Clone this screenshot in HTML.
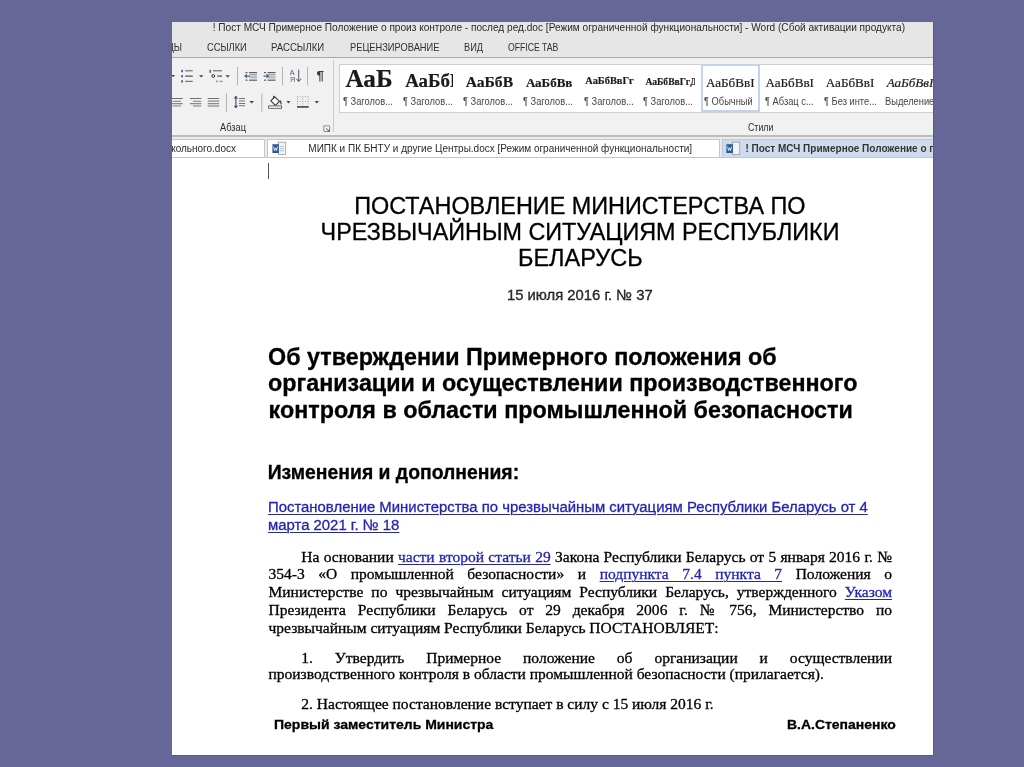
<!DOCTYPE html>
<html><head><meta charset="utf-8">
<style>
*{margin:0;padding:0;box-sizing:border-box}
html,body{width:1024px;height:767px;overflow:hidden;background:#666698}
body{position:relative;font-family:"Liberation Sans",sans-serif}
#clip{position:absolute;left:172px;top:22px;width:761px;height:733px;overflow:hidden;background:#fff;filter:blur(0.35px)}
#pg{position:absolute;left:-172px;top:-22px;width:1024px;height:767px}
.a{position:absolute;white-space:nowrap;line-height:1}
.r{position:absolute}
.sans{font-family:"Liberation Sans",sans-serif}
.serif{font-family:"Liberation Serif",serif}
.tt{color:#2a2a2a}
.tab{color:#303030}
.glab{color:#2e2e2e}
.glb{color:#454545}
.gs{color:#1a1a1a;-webkit-text-stroke:0.2px #1a1a1a}
.dt{color:#2a2a2a}
.doc{color:#000;-webkit-text-stroke:0.3px #000}
.lnk{color:#2424b4;-webkit-text-stroke:0.3px #2424b4;text-decoration:underline;text-decoration-color:#2c2c7c;text-underline-offset:2px;text-decoration-thickness:1.3px}
.j{text-align:justify;text-align-last:justify;white-space:normal}
</style></head><body>
<div class="r" style="left:933px;top:22px;width:1px;height:734px;background:#5b5b80"></div><div class="r" style="left:172px;top:755px;width:762px;height:1px;background:#5b5b80"></div>
<div id="clip"><div id="pg">
<div class="r" style="left:172px;top:22px;width:761px;height:35px;background:#e6e6e6;"></div>
<div class="r" style="left:172px;top:57px;width:761px;height:1px;background:#a8a8a8;"></div>
<div class="r" style="left:172px;top:58px;width:761px;height:77px;background:#f1f1f1;"></div>
<div class="r" style="left:172px;top:134.5px;width:761px;height:2px;background:#bdbdbd;"></div>
<div class="r" style="left:172px;top:136.5px;width:761px;height:21px;background:#ebebeb;"></div>
<div class="r" style="left:172px;top:157px;width:761px;height:598px;background:#ffffff;"></div>
<div class="a sans tt" style="left:212.70px;top:22.65px;font-size:10.1px;">! Пост МСЧ Примерное Положение о произ контроле - послед ред.doc [Режим ограниченной функциональности] - Word (Сбой активации продукта)</div>
<div class="a sans tab" style="left:166.60px;top:42.11px;font-size:10.5px;transform:scaleX(0.885);transform-origin:0 0;">ЦЫ</div>
<div class="a sans tab" style="left:206.60px;top:42.11px;font-size:10.5px;transform:scaleX(0.884);transform-origin:0 0;">ССЫЛКИ</div>
<div class="a sans tab" style="left:271.30px;top:42.11px;font-size:10.5px;transform:scaleX(0.916);transform-origin:0 0;">РАССЫЛКИ</div>
<div class="a sans tab" style="left:349.50px;top:42.11px;font-size:10.5px;transform:scaleX(0.886);transform-origin:0 0;">РЕЦЕНЗИРОВАНИЕ</div>
<div class="a sans tab" style="left:464.40px;top:42.11px;font-size:10.5px;transform:scaleX(0.882);transform-origin:0 0;">ВИД</div>
<div class="a sans tab" style="left:508.10px;top:42.11px;font-size:10.5px;transform:scaleX(0.826);transform-origin:0 0;">OFFICE TAB</div>
<div class="a sans glab" style="left:220.20px;top:123.03px;font-size:10.0px;transform:scaleX(0.927);transform-origin:0 0;">Абзац</div>
<div class="a sans glab" style="left:747.50px;top:122.73px;font-size:10.0px;transform:scaleX(0.88);transform-origin:0 0;">Стили</div>
<div class="r" style="left:333px;top:60px;width:1px;height:72px;background:#c9c9c9;"></div>
<div class="r" style="left:338.5px;top:63.5px;width:600px;height:49px;background:#ffffff;border:1px solid #cfcfcf;border-right:none"></div>
<div class="r" style="left:700.5px;top:64.2px;width:59.5px;height:47.5px;background:transparent;border:2px solid #c3d3ea"></div>
<div class="r" style="left:341.5px;top:64px;width:54.5px;height:30px;overflow:hidden"><div class="r" style="left:-341.5px;top:-64px;width:1024px;height:100px"><div class="a serif gs" style="left:345.50px;top:66.30px;font-size:25.2px;font-weight:bold">АаБ</div></div></div>
<div class="a sans glb" style="left:343.00px;top:97.33px;font-size:10.0px;transform:scaleX(0.93);transform-origin:0 0;">¶ Заголов...</div>
<div class="r" style="left:401.3px;top:64px;width:52.2px;height:30px;overflow:hidden"><div class="r" style="left:-401.3px;top:-64px;width:1024px;height:100px"><div class="a serif gs" style="left:405.20px;top:71.97px;font-size:18.9px;font-weight:bold">АаБбВ</div></div></div>
<div class="a sans glb" style="left:402.50px;top:97.33px;font-size:10.0px;transform:scaleX(0.93);transform-origin:0 0;">¶ Заголов...</div>
<div class="r" style="left:461.1px;top:64px;width:54.5px;height:30px;overflow:hidden"><div class="r" style="left:-461.1px;top:-64px;width:1024px;height:100px"><div class="a serif gs" style="left:465.70px;top:73.64px;font-size:15.6px;font-weight:bold">АаБбВ</div></div></div>
<div class="a sans glb" style="left:463.00px;top:97.33px;font-size:10.0px;transform:scaleX(0.93);transform-origin:0 0;">¶ Заголов...</div>
<div class="r" style="left:520.9px;top:64px;width:54.5px;height:30px;overflow:hidden"><div class="r" style="left:-520.9px;top:-64px;width:1024px;height:100px"><div class="a serif gs" style="left:525.90px;top:75.81px;font-size:13.0px;font-weight:bold">АаБбВв</div></div></div>
<div class="a sans glb" style="left:523.10px;top:97.33px;font-size:10.0px;transform:scaleX(0.93);transform-origin:0 0;">¶ Заголов...</div>
<div class="r" style="left:580.7px;top:64px;width:54.5px;height:30px;overflow:hidden"><div class="r" style="left:-580.7px;top:-64px;width:1024px;height:100px"><div class="a serif gs" style="left:585.30px;top:76.49px;font-size:10.4px;font-weight:bold">АаБбВвГг</div></div></div>
<div class="a sans glb" style="left:583.90px;top:97.33px;font-size:10.0px;transform:scaleX(0.93);transform-origin:0 0;">¶ Заголов...</div>
<div class="r" style="left:640.5px;top:64px;width:54.5px;height:30px;overflow:hidden"><div class="r" style="left:-640.5px;top:-64px;width:1024px;height:100px"><div class="a serif gs" style="left:645.40px;top:77.16px;font-size:9.6px;font-weight:bold">АаБбВвГгД</div></div></div>
<div class="a sans glb" style="left:643.40px;top:97.33px;font-size:10.0px;transform:scaleX(0.93);transform-origin:0 0;">¶ Заголов...</div>
<div class="r" style="left:700.3px;top:64px;width:54.5px;height:30px;overflow:hidden"><div class="r" style="left:-700.3px;top:-64px;width:1024px;height:100px"><div class="a serif gs" style="left:706.00px;top:76.23px;font-size:13.1px;">АаБбВвI</div></div></div>
<div class="a sans glb" style="left:703.90px;top:97.33px;font-size:10.0px;transform:scaleX(0.93);transform-origin:0 0;">¶ Обычный</div>
<div class="r" style="left:760.1px;top:64px;width:54.5px;height:30px;overflow:hidden"><div class="r" style="left:-760.1px;top:-64px;width:1024px;height:100px"><div class="a serif gs" style="left:765.40px;top:76.23px;font-size:13.1px;">АаБбВвI</div></div></div>
<div class="a sans glb" style="left:765.40px;top:97.33px;font-size:10.0px;transform:scaleX(0.93);transform-origin:0 0;">¶ Абзац с...</div>
<div class="r" style="left:819.9px;top:64px;width:54.5px;height:30px;overflow:hidden"><div class="r" style="left:-819.9px;top:-64px;width:1024px;height:100px"><div class="a serif gs" style="left:825.80px;top:76.23px;font-size:13.1px;">АаБбВвI</div></div></div>
<div class="a sans glb" style="left:824.10px;top:97.33px;font-size:10.0px;transform:scaleX(0.93);transform-origin:0 0;">¶ Без инте...</div>
<div class="r" style="left:879.7px;top:64px;width:54.5px;height:30px;overflow:hidden"><div class="r" style="left:-879.7px;top:-64px;width:1024px;height:100px"><div class="a serif gs" style="left:886.70px;top:76.23px;font-size:13.1px;font-style:italic">АаБбВвI</div></div></div>
<div class="a sans glb" style="left:884.80px;top:97.33px;font-size:10.0px;transform:scaleX(0.93);transform-origin:0 0;">Выделение</div>
<div class="r" style="left:172px;top:139px;width:93px;height:18.5px;background:#ffffff;border:1px solid #c6c6c6;border-left:none;border-bottom:none"></div>
<div class="r" style="left:267.3px;top:139px;width:453px;height:18.5px;background:#ffffff;border:1px solid #c6c6c6;border-bottom:none"></div>
<div class="r" style="left:722px;top:139px;width:220px;height:18.5px;background:#cfdcee;border:1px solid #b9c7dc;border-bottom:none"></div>
<div class="r" style="left:172px;top:157px;width:761px;height:1px;background:#c6c6c6;"></div>
<div class="a sans dt" style="left:150.00px;top:143.73px;font-size:10.0px;width:86px;text-align:right;direction:rtl">кольного.docx</div>
<div class="a sans dt" style="left:308.30px;top:143.73px;font-size:10.0px;">МИПК и ПК БНТУ и другие Центры.docx [Режим ограниченной функциональности]</div>
<div class="a sans dt" style="left:745.50px;top:143.73px;font-size:10.0px;font-weight:bold;color:#333">! Пост МСЧ Примерное Положение о произ контроле</div>
<div class="r" style="left:268px;top:162.5px;width:1px;height:16px;background:#555;"></div>
<div class="a sans doc" style="left:354.20px;top:194.77px;font-size:23.42px;">ПОСТАНОВЛЕНИЕ МИНИСТЕРСТВА ПО</div>
<div class="a sans doc" style="left:320.60px;top:220.73px;font-size:23.35px;">ЧРЕЗВЫЧАЙНЫМ СИТУАЦИЯМ РЕСПУБЛИКИ</div>
<div class="a sans doc" style="left:518.00px;top:246.61px;font-size:23.5px;">БЕЛАРУСЬ</div>
<div class="a sans doc" style="left:507.00px;top:288.47px;font-size:14.8px;color:#333">15 июля 2016 г. № 37</div>
<div class="a sans doc" style="left:268.10px;top:345.98px;font-size:23.3px;font-weight:bold">Об утверждении Примерного положения об</div>
<div class="a sans doc" style="left:268.10px;top:372.08px;font-size:23.3px;font-weight:bold">организации и осуществлении производственного</div>
<div class="a sans doc" style="left:268.60px;top:398.68px;font-size:23.3px;font-weight:bold">контроля в области промышленной безопасности</div>
<div class="a sans doc" style="left:267.70px;top:463.39px;font-size:19.38px;font-weight:bold">Изменения и дополнения:</div>
<div class="a sans lnk" style="left:268.00px;top:499.89px;font-size:14.9px;">Постановление Министерства по чрезвычайным ситуациям Республики Беларусь от 4</div>
<div class="a sans lnk" style="left:268.00px;top:517.69px;font-size:14.9px;">марта 2021 г. № 18</div>
<div class="a serif j doc" style="left:301.30px;top:548.50px;width:590.70px;font-size:15.52px;">На основании <span class="lnk">части второй статьи 29</span> Закона Республики Беларусь от 5 января 2016 г. №</div>
<div class="a serif j doc" style="left:268.50px;top:566.30px;width:623.50px;font-size:15.52px;">354-3 «О промышленной безопасности» и <span class="lnk">подпункта 7.4 пункта 7</span> Положения о</div>
<div class="a serif j doc" style="left:268.50px;top:584.20px;width:623.50px;font-size:15.52px;">Министерстве по чрезвычайным ситуациям Республики Беларусь, утвержденного <span class="lnk">Указом</span></div>
<div class="a serif j doc" style="left:268.50px;top:602.00px;width:623.50px;font-size:15.52px;">Президента Республики Беларусь от 29 декабря 2006 г. <span style="margin-right:-5px">№</span> 756, Министерство по</div>
<div class="a serif doc" style="left:268.50px;top:619.60px;font-size:15.52px;">чрезвычайным ситуациям Республики Беларусь ПОСТАНОВЛЯЕТ:</div>
<div class="a serif j doc" style="left:301.30px;top:650.30px;width:590.70px;font-size:15.52px;">1. Утвердить Примерное положение об организации и осуществлении</div>
<div class="a serif doc" style="left:268.50px;top:666.10px;font-size:15.52px;">производственного контроля в области промышленной безопасности (прилагается).</div>
<div class="a serif doc" style="left:301.30px;top:696.00px;font-size:15.52px;">2. Настоящее постановление вступает в силу с 15 июля 2016 г.</div>
<div class="a sans doc" style="left:274.30px;top:718.00px;font-size:13px;transform:scaleX(1.076);transform-origin:0 0;font-weight:bold">Первый заместитель Министра</div>
<div class="a sans doc" style="left:787.10px;top:718.00px;font-size:13px;transform:scaleX(1.074);transform-origin:0 0;font-weight:bold">В.А.Степаненко</div>
<svg width="1024" height="767" style="position:absolute;left:0;top:0">
<g shape-rendering="auto">
<!-- clipped dropdown arrow at far left -->
<path d="M171.5 75 h3.5 l-1.75 2.2z" fill="#444"/>
<!-- numbered list -->
<g fill="#3f6d9e">
<rect x="181.2" y="69.8" width="1.8" height="2.4"/>
<rect x="181.2" y="75" width="1.8" height="2.4"/>
<rect x="181.2" y="80.2" width="1.8" height="2.4"/>
</g>
<g fill="#5a5a5a">
<rect x="185.2" y="70.3" width="7.6" height="1"/>
<rect x="185.2" y="75.5" width="7.6" height="1.3"/>
<rect x="185.2" y="80.8" width="7.6" height="1"/>
</g>
<path d="M199 75.2 h4.5 l-2.25 2.4z" fill="#444"/>
<!-- multilevel list -->
<rect x="209.4" y="69.8" width="1.6" height="3" fill="#3f6d9e"/>
<rect x="213" y="70.3" width="9" height="1" fill="#5a5a5a"/>
<circle cx="213.3" cy="76" r="1.4" fill="none" stroke="#333" stroke-width="1"/>
<rect x="217.4" y="75.5" width="4.6" height="1.2" fill="#4a4a4a"/>
<rect x="216.3" y="80.3" width="1.2" height="2.2" fill="#6a8aae"/>
<rect x="219.5" y="80.8" width="3" height="1" fill="#7a7a7a"/>
<path d="M225.3 75.2 h4.7 l-2.35 2.4z" fill="#444"/>
<!-- separators -->
<rect x="237" y="67" width="1" height="18.5" fill="#b4b4b4"/>
<rect x="282" y="67" width="1" height="18.5" fill="#b4b4b4"/>
<rect x="307" y="67" width="1" height="18.5" fill="#b4b4b4"/>
<!-- decrease indent -->
<g fill="#5f5f5f">
<rect x="245.5" y="72" width="2" height="1.2"/><rect x="249" y="72" width="8" height="1.2"/>
<rect x="249.5" y="74" width="7.5" height="0.9" fill="#9a9a9a"/>
<rect x="249.5" y="75.7" width="7.5" height="0.9" fill="#9a9a9a"/>
<rect x="249.5" y="77.4" width="7.5" height="0.9" fill="#9a9a9a"/>
<rect x="245.5" y="79.6" width="2" height="1.2"/><rect x="249" y="79.6" width="8" height="1.2"/>
</g>
<path d="M244 76.1 l3-2.4 v1.8 h3 v1.2 h-3 v1.8z" fill="#48698c"/>
<!-- increase indent -->
<g fill="#5f5f5f">
<rect x="264" y="72" width="2" height="1.2"/><rect x="267.5" y="72" width="8" height="1.2"/>
<rect x="268" y="74" width="7.5" height="0.9" fill="#9a9a9a"/>
<rect x="268" y="75.7" width="7.5" height="0.9" fill="#9a9a9a"/>
<rect x="268" y="77.4" width="7.5" height="0.9" fill="#9a9a9a"/>
<rect x="264" y="79.6" width="2" height="1.2"/><rect x="267.5" y="79.6" width="8" height="1.2"/>
</g>
<path d="M269.5 76.1 l-3-2.4 v1.8 h-3 v1.2 h3 v1.8z" fill="#48698c"/>
<!-- sort -->
<text x="289.7" y="75.3" font-family="Liberation Sans" font-size="7.2" fill="#3f5f83">А</text>
<text x="289.9" y="82" font-family="Liberation Sans" font-size="7.2" fill="#5e4c7c">Я</text>
<rect x="298.2" y="69.6" width="1" height="11.6" fill="#555"/>
<path d="M296.3 78.6 l2.4 3 l2.4-3" fill="none" stroke="#555" stroke-width="1"/>
<!-- pilcrow -->
<text x="316.5" y="79.8" font-family="Liberation Sans" font-weight="bold" font-size="13.5" fill="#3a3a3a">¶</text>

<!-- row 2: alignment -->
<g fill="#707070">
<rect x="170" y="98" width="12.8" height="1"/><rect x="172.5" y="100.8" width="8.5" height="0.9"/>
<rect x="170" y="103.2" width="12.8" height="1"/><rect x="172.5" y="105.5" width="8.5" height="0.9"/>
<rect x="189.9" y="98" width="11.4" height="1"/><rect x="193" y="100.8" width="8.3" height="0.9"/>
<rect x="189.9" y="103.2" width="11.4" height="1"/><rect x="193" y="105.5" width="8.3" height="0.9"/>
<rect x="207.7" y="98" width="11.5" height="1"/><rect x="207.7" y="100.6" width="11.5" height="1"/>
<rect x="207.7" y="103.2" width="11.5" height="1"/><rect x="207.7" y="105.5" width="11.5" height="1"/>
</g>
<rect x="226" y="93.6" width="1" height="18" fill="#b4b4b4"/>
<rect x="261.3" y="93.6" width="1" height="18" fill="#b4b4b4"/>
<!-- line spacing -->
<path d="M235.9 96 v12" stroke="#3d5068" stroke-width="1.1"/>
<path d="M233.6 98.4 l2.3-2.5 l2.3 2.5z M233.6 105.7 l2.3 2.5 l2.3-2.5z" fill="#3d5068"/>
<g fill="#666"><rect x="239" y="98" width="6" height="0.9"/><rect x="239" y="100.5" width="6" height="0.9"/><rect x="239" y="103" width="6" height="0.9"/><rect x="239" y="105.3" width="6" height="0.9"/></g>
<path d="M249.4 100.9 h4.7 l-2.35 2.5z" fill="#444"/>
<!-- shading bucket -->
<path d="M270.8 100.8 l4-4 l4.6 4.6 l-4 4z" fill="#fff" stroke="#3a3a3a" stroke-width="1.1"/>
<path d="M273.6 95.8 v3.2" stroke="#3a3a3a" stroke-width="1"/>
<path d="M279.8 100.6 q1.8 1.6 1.2 3.8" fill="none" stroke="#444" stroke-width="1.3"/>
<rect x="268.6" y="105.9" width="13" height="2.4" fill="#fff" stroke="#555" stroke-width="0.9"/>
<path d="M286.4 100.9 h4.1 l-2.05 2.5z" fill="#444"/>
<!-- borders -->
<g fill="#9a9a9a">
<rect x="297" y="96.2" width="1" height="1"/><rect x="299.6" y="96.2" width="1" height="1"/><rect x="302.3" y="96.2" width="1" height="1"/><rect x="305" y="96.2" width="1" height="1"/><rect x="307.7" y="96.2" width="1" height="1"/>
<rect x="297" y="101" width="1" height="1"/><rect x="299.6" y="101" width="1" height="1"/><rect x="302.3" y="101" width="1" height="1"/><rect x="305" y="101" width="1" height="1"/><rect x="307.7" y="101" width="1" height="1"/>
<rect x="297" y="98.6" width="1" height="1"/><rect x="302.3" y="98.6" width="1" height="1"/><rect x="307.7" y="98.6" width="1" height="1"/>
<rect x="297" y="103.4" width="1" height="1"/><rect x="302.3" y="103.4" width="1" height="1"/><rect x="307.7" y="103.4" width="1" height="1"/>
</g>
<rect x="297" y="106" width="11.7" height="1.8" fill="#555"/>
<path d="M314.6 100.9 h4.4 l-2.2 2.5z" fill="#444"/>
<!-- launcher -->
<path d="M323.8 125.8 h5.8 v5.6 M323.8 125.8 v5.6 h5.8" fill="none" stroke="#888" stroke-width="0.9"/>
<path d="M326 128 l3.4 3.4 M327 131.4 h2.4 v-2.4" fill="none" stroke="#666" stroke-width="0.9"/>
<!-- doc tab icons -->
<rect x="278.3" y="142.2" width="7.4" height="12.3" fill="#f4f4f4" stroke="#9a9a9a" stroke-width="0.8"/>
<rect x="272.4" y="144.2" width="6.6" height="8.8" fill="#2e5a9c"/>
<path d="M273.6 146.5 l1 4 l1-2.6 l1 2.6 l1-4" fill="none" stroke="#fff" stroke-width="0.8"/>
<g fill="#a8b8cc"><rect x="280" y="146" width="4" height="0.8"/><rect x="280" y="148.2" width="4" height="0.8"/><rect x="280" y="150.4" width="4" height="0.8"/></g>
<rect x="732.3" y="142.2" width="7.4" height="12.3" fill="#f4f4f4" stroke="#9a9a9a" stroke-width="0.8"/>
<rect x="726.4" y="144.2" width="6.6" height="8.8" fill="#2e5a9c"/>
<path d="M727.6 146.5 l1 4 l1-2.6 l1 2.6 l1-4" fill="none" stroke="#fff" stroke-width="0.8"/>
</g>
</svg>

</div></div>
</body></html>
